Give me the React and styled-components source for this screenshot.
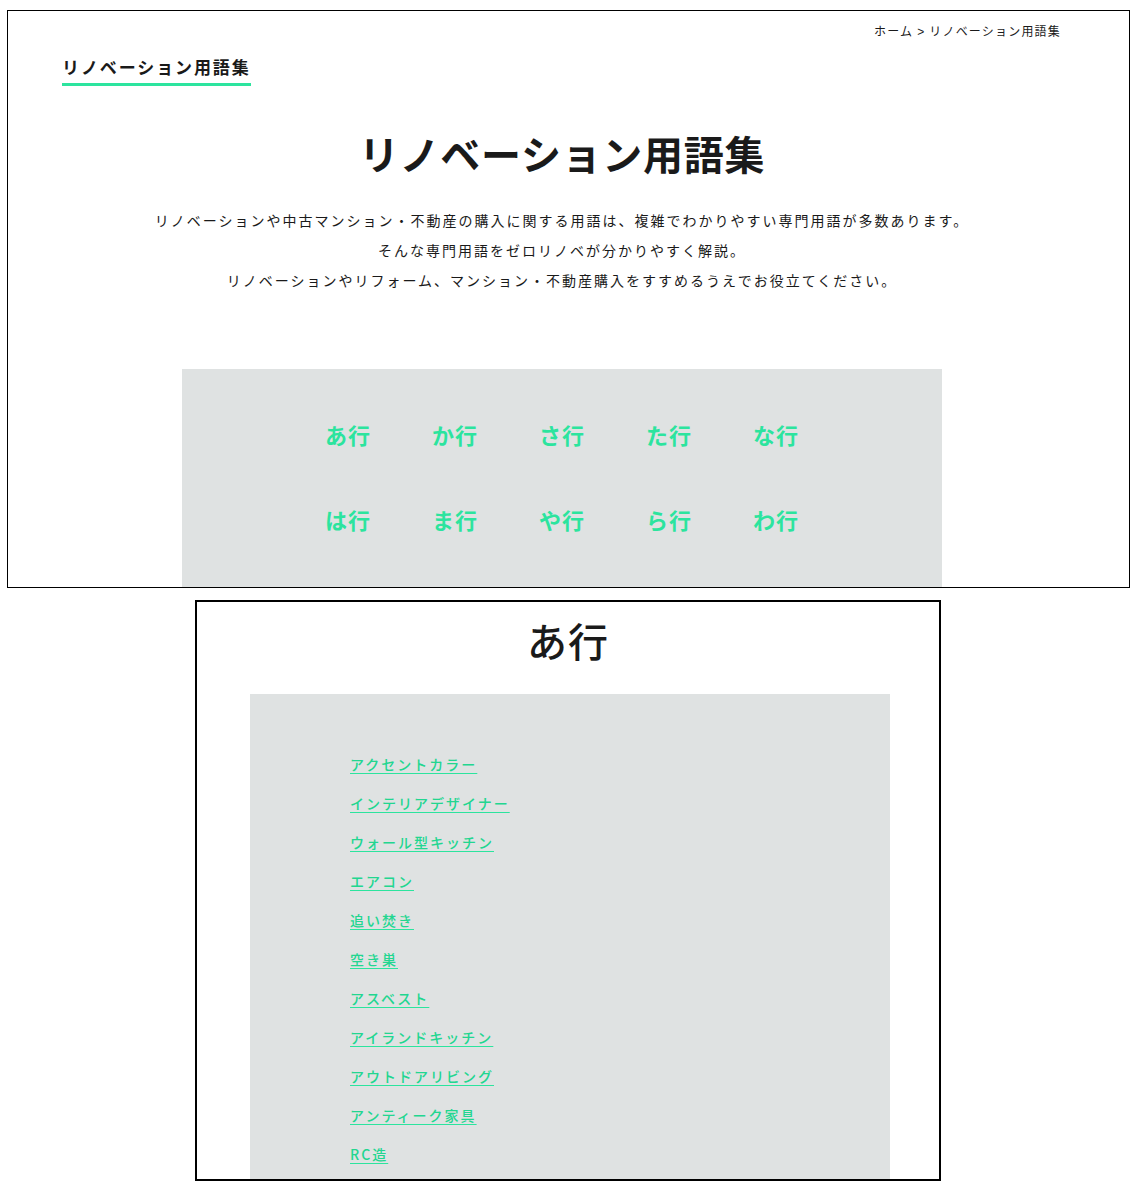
import React from "react";
import styled, { createGlobalStyle } from "styled-components";

const GREEN = "#2ce49e";

const GlobalStyle = createGlobalStyle`
  body {
    margin: 0;
    background: #fff;
    font-family: "Noto Sans CJK JP", "Noto Sans", sans-serif;
    color: #1a1a1a;
  }
`;

const kanaRows = [
  ["あ行", "か行", "さ行", "た行", "な行"],
  ["は行", "ま行", "や行", "ら行", "わ行"],
];

const aTerms = [
  "アクセントカラー",
  "インテリアデザイナー",
  "ウォール型キッチン",
  "エアコン",
  "追い焚き",
  "空き巣",
  "アスベスト",
  "アイランドキッチン",
  "アウトドアリビング",
  "アンティーク家具",
  "RC造",
];

const App = () => {
  return (
    <>
      <GlobalStyle />
      <StyledTopFrame>
        <StyledInner>
          <StyledBreadcrumb>
            ホーム <StyledSep>&gt;</StyledSep> リノベーション用語集
          </StyledBreadcrumb>
          <StyledPageLabel>リノベーション用語集</StyledPageLabel>
          <StyledHeading>リノベーション用語集</StyledHeading>
          <StyledLead>
            リノベーションや中古マンション・不動産の購入に関する用語は、複雑でわかりやすい専門用語が多数あります。
            <br />
            そんな専門用語をゼロリノベが分かりやすく解説。
            <br />
            リノベーションやリフォーム、マンション・不動産購入をすすめるうえでお役立てください。
          </StyledLead>
          <StyledKanaBox>
            {kanaRows.map((row, i) => (
              <StyledKanaRow key={i}>
                {row.map((k) => (
                  <StyledKanaLink key={k} href="#">
                    {k}
                  </StyledKanaLink>
                ))}
              </StyledKanaRow>
            ))}
          </StyledKanaBox>
        </StyledInner>
      </StyledTopFrame>

      <StyledSectionFrame>
        <StyledSectionTitle>あ行</StyledSectionTitle>
        <StyledTermBox>
          {aTerms.map((t) => (
            <StyledTermLink key={t} href="#">
              {t}
            </StyledTermLink>
          ))}
        </StyledTermBox>
      </StyledSectionFrame>
    </>
  );
};

const StyledTopFrame = styled.div`
  box-sizing: border-box;
  margin: 10px 0 0 7px;
  width: 1123px;
  height: 578px;
  border: 1px solid #000;
  overflow: hidden;
`;
const StyledInner = styled.div`
  width: 1108px;
  display: flex;
  flex-direction: column;
`;
const StyledBreadcrumb = styled.div`
  align-self: flex-end;
  margin: 11px 55px 0 0;
  font-size: 12px;
  line-height: 18px;
  letter-spacing: 1.2px;
  color: #1a1a1a;
`;
const StyledSep = styled.span`
  font-family: "Liberation Sans", sans-serif;
`;
const StyledPageLabel = styled.div`
  align-self: flex-start;
  margin: 13px 0 0 54px;
  font-size: 17px;
  line-height: 26px;
  font-weight: 700;
  letter-spacing: 1.9px;
  padding-bottom: 3px;
  border-bottom: 3px solid ${GREEN};
`;
const StyledHeading = styled.h1`
  margin: 39px 0 0;
  text-align: center;
  font-size: 40px;
  line-height: 56px;
  font-weight: 700;
  letter-spacing: 0.7px;
`;
const StyledLead = styled.p`
  margin: 24px 0 0;
  text-align: center;
  font-size: 14px;
  line-height: 30px;
  letter-spacing: 2px;
`;
const StyledKanaBox = styled.div`
  margin: 74px 0 0 174px;
  width: 760px;
  height: 300px;
  background: #dfe2e2;
  padding: 50px 0 0 143px;
  box-sizing: border-box;
  display: flex;
  flex-direction: column;
  gap: 55px;
`;
const StyledKanaRow = styled.div`
  display: grid;
  grid-template-columns: repeat(5, 107px);
`;
const StyledKanaLink = styled.a`
  font-size: 22px;
  line-height: 30px;
  font-weight: 700;
  letter-spacing: 1px;
  color: ${GREEN};
  text-decoration: none;
`;

const StyledSectionFrame = styled.div`
  box-sizing: border-box;
  margin: 12px 0 0 195px;
  width: 746px;
  height: 581px;
  border: 2px solid #000;
  overflow: hidden;
  display: flex;
  flex-direction: column;
`;
const StyledSectionTitle = styled.h2`
  margin: 12px 0 0;
  text-align: center;
  font-size: 40px;
  line-height: 52px;
  font-weight: 500;
  letter-spacing: 1px;
`;
const StyledTermBox = styled.div`
  margin: 28px 0 0 53px;
  width: 640px;
  flex: 1;
  background: #dfe2e2;
  padding: 60px 0 0 100px;
  box-sizing: border-box;
  display: flex;
  flex-direction: column;
  align-items: flex-start;
  gap: 19px;
`;
const StyledTermLink = styled.a`
  font-size: 14px;
  line-height: 20px;
  font-weight: 500;
  letter-spacing: 2px;
  color: #22d690;
  text-decoration: underline;
  text-decoration-color: ${GREEN};
  text-underline-offset: 3px;
`;

export default App;
